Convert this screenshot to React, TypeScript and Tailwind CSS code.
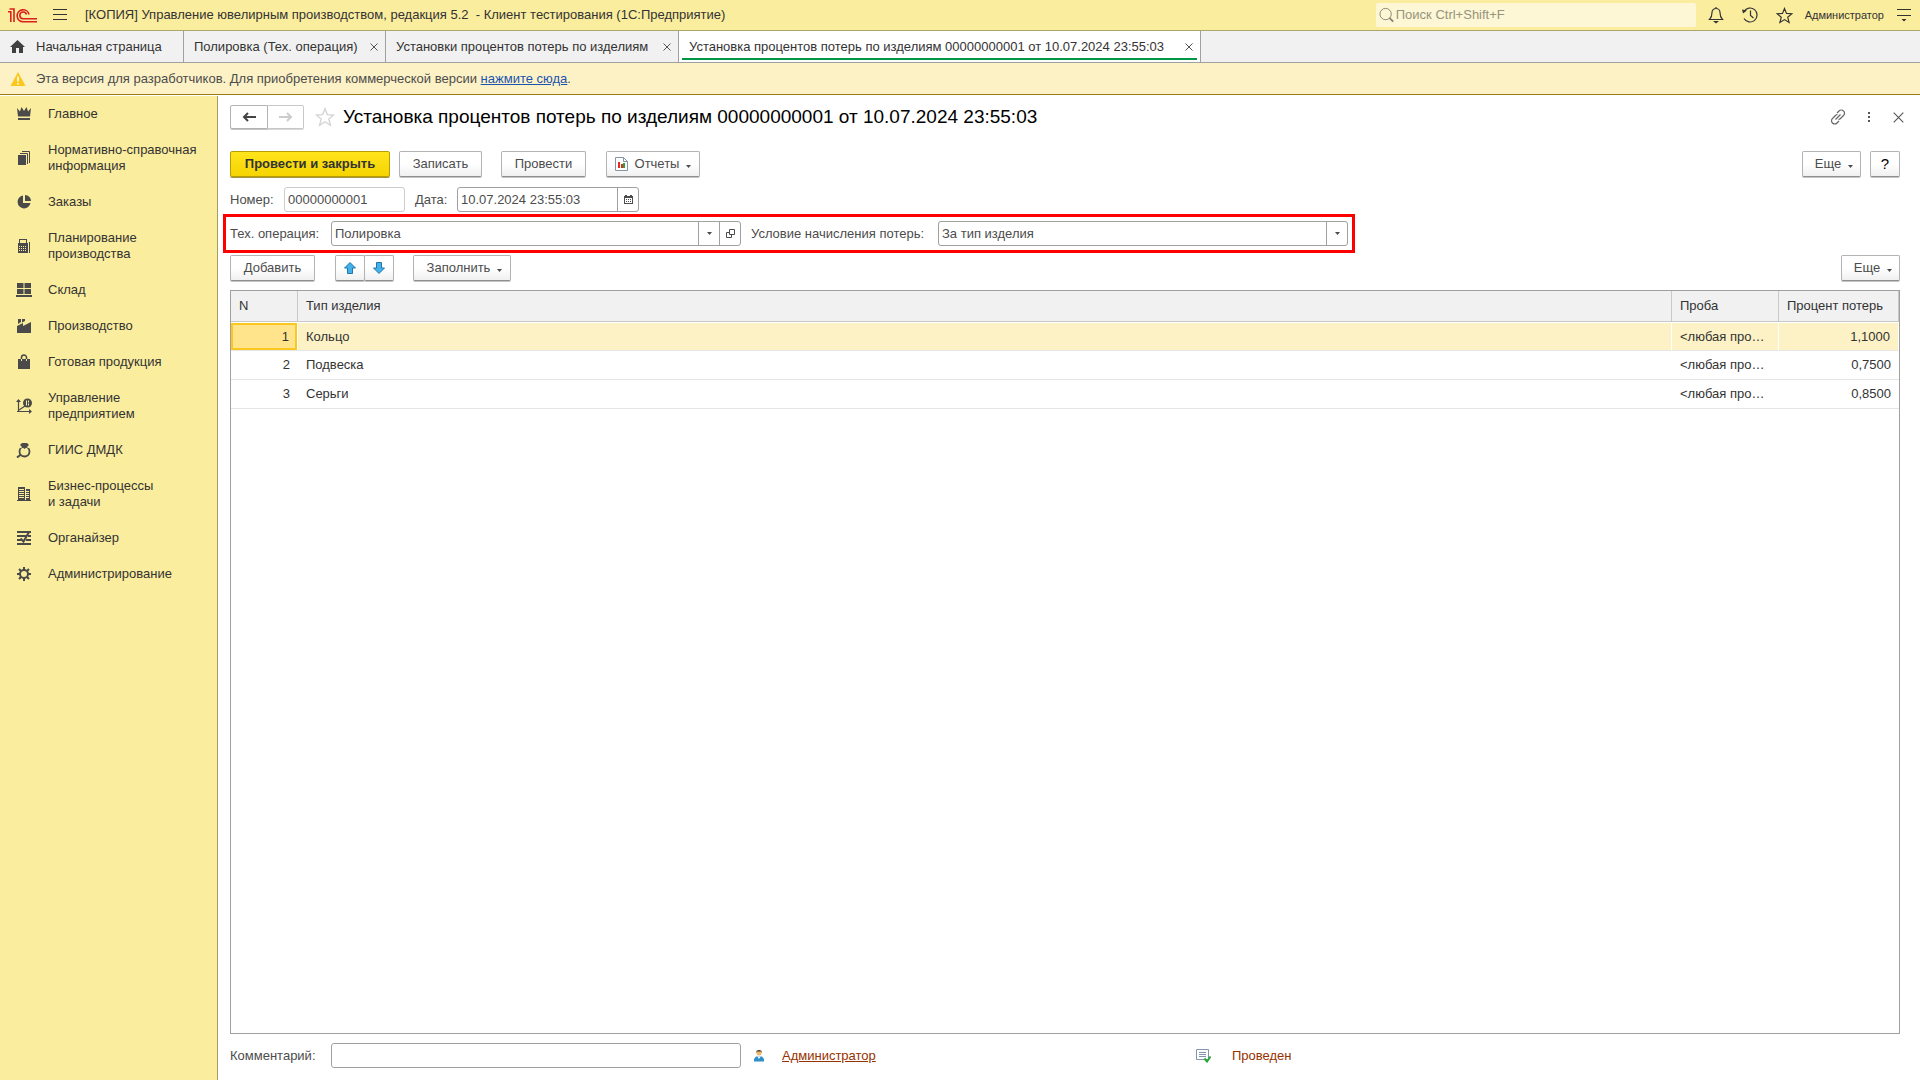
import { useState } from "react";
import type { ReactNode } from "react";

interface MenuItem {
  title: string;
  icon: ReactNode;
}

interface LossRow {
  id: number;
  type: string;
  sample: string;
  percent: string;
}

const rows: LossRow[] = [
  { id: 1, type: "Кольцо", sample: "<любая проба>", percent: "1,1000" },
  { id: 2, type: "Подвеска", sample: "<любая проба>", percent: "0,7500" },
  { id: 3, type: "Серьги", sample: "<любая проба>", percent: "0,8500" },
];

const tabs = [
  { title: "Полировка (Тех. операция)", width: "w-[202px]", active: false },
  { title: "Установки процентов потерь по изделиям", width: "w-[293px]", active: false },
  {
    title: "Установка процентов потерь по изделиям 00000000001 от 10.07.2024 23:55:03",
    width: "w-[522px]",
    active: true,
  },
];

const menu: MenuItem[] = [
  {
    title: "Главное",
    icon: <path d="M1 2l3 3.500L5.500 1 8 5l2.500-4L12 5.500 15 2l-1 8.500H2zM2 12h12v2H2z" />,
  },
  {
    title: "Нормативно-справочная информация",
    icon: (
      <>
        <path d="M2 5h8v10H2z" />
        <path d="M4 3.500h7.500V14M6 1.500h7.500V13" fill="none" stroke="currentColor" />
      </>
    ),
  },
  {
    title: "Заказы",
    icon: (
      <>
        <path d="M7 1.500A6.500 6.500 0 1 0 14.500 9H7z" />
        <path d="M9 1a6 6 0 0 1 6 6H9z" />
      </>
    ),
  },
  {
    title: "Планирование производства",
    icon: (
      <>
        <path d="M3 1h8v4h1v10H2V5h1zM4 2v3h6V2z" fillRule="evenodd" />
        <path d="M13.500 4v11" stroke="currentColor" />
        <path d="M3 8.500h8M3 10.500h8M3 12.500h8" stroke="#fbed9e" strokeDasharray="1 1" />
      </>
    ),
  },
  {
    title: "Склад",
    icon: <path d="M1 1h6.500v5H1zM8.500 1H15v5H8.500zM1 7h6.500v5H1zM8.500 7H15v5H8.500zM0 13h16v2H0z" />,
  },
  {
    title: "Производство",
    icon: <path d="M2 1h3v3L2 6zM6 1h3v2L6 4.500zM1 8l6-3v3l8-4v11H1z" />,
  },
  {
    title: "Готовая продукция",
    icon: (
      <>
        <path d="M2 5h12v10H2z" />
        <path d="M5.500 5V3.500a2.500 2.500 0 0 1 5 0V5" fill="none" stroke="currentColor" strokeWidth="1.500" />
        <path d="M5.500 5v2M10.500 5v2" stroke="#fbed9e" />
      </>
    ),
  },
  {
    title: "Управление предприятием",
    icon: (
      <>
        <path d="M2.500 2v12M1 13.500h13M3 12l6-4" fill="none" stroke="currentColor" strokeWidth="1.200" />
        <path d="M0 4l2.500-3L5 4zM13 11l3 2.500-3 2.500z" />
        <circle cx="11.500" cy="5" r="4.500" />
        <path d="M10.500 2.500v5M12.500 2.500v2M12.500 5.500v2" stroke="#fbed9e" />
      </>
    ),
  },
  {
    title: "ГИИС ДМДК",
    icon: (
      <>
        <circle cx="8.500" cy="9.500" r="5" fill="none" stroke="currentColor" strokeWidth="1.800" />
        <path d="M4 5.500l1.500-1M13 5.500l-1.500-1" stroke="#fbed9e" strokeWidth="2" />
        <path d="M6 1h5l2 2-4.500 4L4 3z" />
        <path d="M5 12.500l-4 3" stroke="currentColor" strokeWidth="2" />
      </>
    ),
  },
  {
    title: "Бизнес-процессы и\u00a0задачи",
    icon: (
      <>
        <path d="M2 1h7v14H2zM10 3h4v12h-4zM1 14h14v1H1z" />
        <path
          d="M3 3.500h5M3 5.500h5M3 7.500h5M3 9.500h5M3 11.500h5M10 5.500h3M10 7.500h3M10 9.500h3M10 11.500h3"
          stroke="#fbed9e"
        />
      </>
    ),
  },
  {
    title: "Органайзер",
    icon: (
      <>
        <path d="M1 1h14v2H1zM1 5h9v2H1zM12 5h3v2h-3zM1 9h4v2H1zM10 9h5v2h-5zM1 13h14v2H1z" />
        <path d="M4.500 8.500l3 3L13 2" fill="none" stroke="currentColor" strokeWidth="2" />
      </>
    ),
  },
  {
    title: "Администрирование",
    icon: (
      <>
        <circle cx="8" cy="8" r="4" fill="none" stroke="currentColor" strokeWidth="2" />
        <path
          d="M8 1v3M8 12v3M1 8h3M12 8h3M3 3l2 2M11 11l2 2M13 3l-2 2M5 11l-2 2"
          stroke="currentColor"
          strokeWidth="2"
        />
      </>
    ),
  },
];

const fieldBorder = "border border-[#a0a0a0] rounded-[3px] bg-white";
const headCell = "border-b border-r border-[#c8c8c8] bg-[#f1f1f1] px-2 font-normal";

const Caret = () => (
  <svg width="5" height="3" viewBox="0 0 5 3" className="shrink-0" fill="#4c4c4c">
    <path d="M0 0h5L2.500 3z" />
  </svg>
);

const Cross = ({ size }: { size: number }) => (
  <svg width={size} height={size} viewBox="0 0 8 8" fill="none" stroke="#555" className="shrink-0">
    <path d="M.5.5l7 7M7.500.5l-7 7" strokeWidth={size > 8 ? 0.8 : 1} />
  </svg>
);

const Star = ({ size, color }: { size: number; color: string }) => (
  <svg width={size} height={size} viewBox="0 0 18 18" fill="none" stroke={color} strokeWidth="1.200">
    <path d="M9 1.500l2.100 5.300 5.700.4-4.400 3.600 1.500 5.600L9 13.300l-4.900 3.100 1.500-5.600L1.200 7.200l5.700-.4z" />
  </svg>
);

interface ButtonProps {
  children: ReactNode;
  className: string;
  label?: string;
}

const Button = ({ children, className, label }: ButtonProps) => (
  <button
    type="button"
    aria-label={label}
    className={`flex h-[26px] items-center justify-center rounded-[2px] border border-[#b3b3b3] border-b-[#8f8f8f] bg-linear-to-b from-white from-50% to-[#f0f0f0] shadow-[0_1px_0_#c4c4c4] ${className}`}
  >
    {children}
  </button>
);

const Dropdown = ({ children, className }: ButtonProps) => (
  <Button className={`gap-[7px] ${className}`}>
    {children}
    <span className="pt-1">
      <Caret />
    </span>
  </Button>
);

const Header = () => (
  <header className="flex h-[31px] shrink-0 items-center border-b border-[#aca66b] bg-[#fbed9e] pl-2 pr-[9px] text-[#333]">
    <svg width="30" height="15" viewBox="0 0 30 15" fill="none" stroke="#d9201f" strokeWidth="1.600">
      <path d="M0 3.800h2.800V14M1.500 1h4.500v13" />
      <path d="M21 6.500A6 6 0 1 0 15 13.800h14" />
      <path d="M18.500 6.500A3.400 3.400 0 1 0 15 10.800h14" />
    </svg>
    <button type="button" aria-label="Меню" className="ml-[15px]">
      <svg width="14" height="12" viewBox="0 0 14 12" stroke="#333" strokeWidth="1">
        <path d="M0 .5h14M0 5.500h14M0 10.500h14" />
      </svg>
    </button>
    <h1 className="ml-[18px] whitespace-pre">
      {"[КОПИЯ] Управление ювелирным производством, редакция 5.2  - Клиент тестирования (1С:Предприятие)"}
    </h1>
    <label className="ml-auto flex h-[24px] w-[320px] items-center gap-[2px] rounded-[2px] bg-[#fdf7d5] pl-[3px]">
      <svg width="16" height="16" viewBox="0 0 16 16" fill="none" stroke="#8a8672">
        <circle cx="7" cy="7" r="6" />
        <path d="M11 11l4 4" strokeWidth="2" />
      </svg>
      <input
        type="text"
        aria-label="Поиск"
        placeholder="Поиск Ctrl+Shift+F"
        className="w-full bg-transparent outline-none placeholder:text-[#97937d]"
      />
    </label>
    <div className="ml-[12px] flex items-center gap-[17px]">
      <button type="button" aria-label="Уведомления">
        <svg width="16" height="18" viewBox="0 0 16 18" fill="none" stroke="#333" strokeWidth="1.200">
          <path d="M1.500 13.500c2-2 2.500-4 2.500-7a4 4 0 0 1 8 0c0 3 .5 5 2.500 7zM8 1v1.500" />
          <path d="M5 15h6l-3 2.500z" fill="#333" stroke="none" />
        </svg>
      </button>
      <button type="button" aria-label="История">
        <svg width="18" height="18" viewBox="0 0 18 18" fill="none" stroke="#333" strokeWidth="1.200">
          <path d="M3 5.500A7 7 0 1 1 3 12.500M9.500 4.500v5l3 2.500" />
          <path d="M1 3.500l5 1-4 3z" fill="#333" stroke="none" />
        </svg>
      </button>
      <button type="button" aria-label="Избранное">
        <Star size={17} color="#333" />
      </button>
    </div>
    <span className="ml-[12px] text-[11px]">Администратор</span>
    <button type="button" aria-label="Сервис" className="ml-[13px]">
      <svg width="14" height="14" viewBox="0 0 14 14" stroke="#333">
        <path d="M0 1.500h14M0 7.500h14" />
        <path d="M4.500 11h5L7 13.500z" fill="#333" stroke="none" />
      </svg>
    </button>
  </header>
);

const Tabs = () => (
  <nav className="flex h-[32px] shrink-0 border-b border-[#a0a0a0] bg-[#f1f1f1] text-[#333]">
    <button type="button" className="flex w-[184px] items-center border-r border-[#a0a0a0] pl-[10px]">
      <svg width="15" height="13" viewBox="0 0 15 13" fill="#404040">
        <path d="M7.500 0L15 7h-2v6H9V8H6v5H2V7H0z" />
      </svg>
      <span className="ml-[11px]">Начальная страница</span>
    </button>
    {tabs.map((tab) => (
      <div
        key={tab.title}
        className={`relative flex items-center justify-between whitespace-nowrap border-r border-[#a0a0a0] pl-[10px] pr-[7px] ${tab.width} ${tab.active ? "bg-white" : ""}`}
      >
        <button type="button">{tab.title}</button>
        <button type="button" aria-label="Закрыть">
          <Cross size={8} />
        </button>
        {tab.active && <span className="absolute inset-x-[3px] bottom-[2px] h-[2px] bg-[#009646]" />}
      </div>
    ))}
  </nav>
);

const Banner = () => (
  <div className="flex h-[32px] shrink-0 items-center border-b border-[#997d1a] bg-[#fdf2c5] pl-[10px] text-[#4c4c4c]">
    <svg width="16" height="14" viewBox="0 0 16 14">
      <path d="M8 0l7.500 14H.5z" fill="#fcc71c" />
      <path d="M7.200 4.500h1.600v5H7.200zM7.200 11h1.600v1.500H7.200z" fill="#fff" />
    </svg>
    <p className="ml-[10px]">
      Эта версия для разработчиков. Для приобретения коммерческой версии{" "}
      <a href="#" className="text-[#1a54b0] underline">нажмите сюда</a>.
    </p>
  </div>
);

const Sidebar = () => (
  <aside className="w-[218px] shrink-0 border-r border-[#a69c60] bg-[#fbed9e] text-[#333]">
    {menu.map((item) => (
      <a key={item.title} href="#" className="flex items-center gap-[16px] py-[10px] pl-[16px] pr-[10px] leading-4">
        <svg width="16" height="16" viewBox="0 0 16 16" className="shrink-0 text-[#4a4a4a]" fill="currentColor">
          {item.icon}
        </svg>
        <span className="max-w-[155px]">{item.title}</span>
      </a>
    ))}
  </aside>
);

const LossTable = () => {
  const [selected, setSelected] = useState(1);

  return (
    <div className="mt-[9px] flex-1 border border-[#a0a0a0]">
      <table className="w-full table-fixed border-separate border-spacing-0 text-left text-[#333]">
        <thead>
          <tr className="h-[31px]">
            <th className={`w-[67px] ${headCell}`}>N</th>
            <th className={headCell}>Тип изделия</th>
            <th className={`w-[107px] ${headCell}`}>Проба</th>
            <th className={`w-[120px] ${headCell}`}>Процент потерь</th>
          </tr>
        </thead>
        <tbody>
          {rows.map((row) => {
            const active = row.id === selected;
            const cell = active
              ? "border-y border-r border-b-[#e5e5e5] border-r-white border-t-white bg-[#fdf2c5]"
              : "border-b border-[#e5e5e5]";

            return (
              <tr key={row.id} className="h-[29px]" onClick={() => setSelected(row.id)}>
                <td
                  className={`px-2 text-right ${
                    active
                      ? "border-y border-r border-b-[#e5e5e5] border-r-white border-t-white bg-[#ffe48c] shadow-[inset_0_0_0_2px_#fac81e]"
                      : "border-b border-[#e5e5e5]"
                  }`}
                >
                  {row.id}
                </td>
                <td className={`px-2 ${cell}`}>{row.type}</td>
                <td className={`truncate px-2 ${cell}`}>{row.sample}</td>
                <td className={`px-2 text-right ${cell}`}>{row.percent}</td>
              </tr>
            );
          })}
        </tbody>
      </table>
    </div>
  );
};

const DocumentForm = () => {
  const [date, setDate] = useState("10.07.2024 23:55:03");
  const [comment, setComment] = useState("");

  return (
    <main className="flex min-w-0 flex-1 flex-col bg-white pb-[12px] pl-[12px] pr-[20px] pt-[9px] text-[#4c4c4c]">
      <div className="flex h-[24px] items-center">
        <div className="flex h-[24px]">
          <button
            type="button"
            aria-label="Назад"
            className="flex w-[38px] items-center justify-center rounded-l-[2px] border border-[#b3b3b3] shadow-[0_1px_0_#c4c4c4]"
          >
            <svg width="14" height="10" viewBox="0 0 14 10" fill="none" stroke="#444" strokeWidth="2">
              <path d="M14 5H2M6 1L2 5l4 4" />
            </svg>
          </button>
          <button
            type="button"
            aria-label="Вперед"
            className="flex w-[36px] items-center justify-center rounded-r-[2px] border border-l-0 border-[#c8c8c8] shadow-[0_1px_0_#d8d8d8]"
          >
            <svg width="14" height="10" viewBox="0 0 14 10" fill="none" stroke="#ccc" strokeWidth="2">
              <path d="M0 5h12M8 1l4 4-4 4" />
            </svg>
          </button>
        </div>
        <button type="button" aria-label="В избранное" className="ml-[11px]">
          <Star size={20} color="#d4d4d4" />
        </button>
        <h2 className="ml-[8px] text-[19px] leading-6 text-black">
          Установка процентов потерь по изделиям 00000000001 от 10.07.2024 23:55:03
        </h2>
        <div className="-mr-1 ml-auto flex items-center gap-[22px]">
          <button type="button" aria-label="Ссылка">
            <svg width="16" height="16" viewBox="0 0 16 16" fill="none" stroke="#666" strokeWidth="1.200">
              <path d="M7 4l2-2a3 3 0 0 1 4.500 0 3 3 0 0 1 0 4.500l-3 3a3 3 0 0 1-2 1M9 12l-2 2a3 3 0 0 1-4.500 0 3 3 0 0 1 0-4.500l3-3a3 3 0 0 1 2-1M5.500 10.500l5-5" />
            </svg>
          </button>
          <button type="button" aria-label="Действия">
            <svg width="3" height="11" viewBox="0 0 3 11" fill="#555">
              <path d="M0 0h2v2H0zM0 4h2v2H0zM0 8h2v2H0z" />
            </svg>
          </button>
          <button type="button" aria-label="Закрыть форму">
            <Cross size={11} />
          </button>
        </div>
      </div>

      <div className="mt-[22px] flex">
        <button
          type="button"
          className="h-[26px] w-[160px] rounded-[2px] border border-[#b79d05] bg-linear-to-b from-[#ffe51a] to-[#f5d400] font-bold text-[#333] shadow-[0_1px_0_#a8923a]"
        >
          Провести и закрыть
        </button>
        <Button className="ml-[9px] w-[83px]">Записать</Button>
        <Button className="ml-[19px] w-[85px]">Провести</Button>
        <Dropdown className="ml-[20px] w-[94px]">
          <svg width="13" height="14" viewBox="0 0 13 14" fill="none">
            <path d="M.5.5h8l4 4v9H.5z" fill="#fff" stroke="#8496a6" />
            <path d="M8.500.5v4h4" stroke="#8496a6" />
            <path d="M3 5h2v6H3z" fill="#e32b22" />
            <path d="M6 7h2v4H6z" fill="#e32b22" />
            <path d="M8 6h2v5H8z" fill="#2da33a" />
          </svg>
          Отчеты
        </Dropdown>
        <Dropdown className="ml-auto w-[59px] pl-[5px]">Еще</Dropdown>
        <Button className="ml-[9px] w-[30px] text-[15px] text-black">?</Button>
      </div>

      <div className="mt-[10px] flex h-[25px] items-center">
        <label htmlFor="number" className="w-[54px]">Номер:</label>
        <input
          id="number"
          readOnly
          value="00000000001"
          className="h-[25px] w-[121px] rounded-[3px] border border-[#ccc] px-[3px] outline-none"
        />
        <label htmlFor="date" className="ml-[10px] w-[42px]">Дата:</label>
        <div className={`flex h-[25px] w-[182px] ${fieldBorder}`}>
          <input
            id="date"
            value={date}
            onChange={(e) => setDate(e.target.value)}
            className="min-w-0 flex-1 px-[3px] outline-none"
          />
          <button
            type="button"
            aria-label="Выбрать дату"
            className="flex w-[21px] items-center justify-center border-l border-[#a0a0a0]"
          >
            <svg width="9" height="9" viewBox="0 0 9 9" fill="#4c4c4c">
              <path d="M0 1h1V0h2v1h3V0h2v1h1v8H0zM1 3v5h7V3z" fillRule="evenodd" />
              <path d="M2 4.500h5M2 6.500h5" stroke="#4c4c4c" strokeDasharray="1 1" />
            </svg>
          </button>
        </div>
      </div>

      <div className="mt-[9px] flex h-[25px] items-center self-start outline-[3px] outline-offset-4 outline-[#f00]">
        <label htmlFor="operation" className="w-[101px]">Тех. операция:</label>
        <div className={`flex h-[25px] w-[410px] ${fieldBorder}`}>
          <div className="relative flex flex-1">
            <select id="operation" className="flex-1 appearance-none px-[3px] outline-none">
              <option>Полировка</option>
            </select>
            <span className="pointer-events-none absolute inset-y-0 right-0 flex w-[21px] items-center justify-center border-l border-[#a0a0a0]">
              <Caret />
            </span>
          </div>
          <button
            type="button"
            aria-label="Открыть"
            className="flex w-[21px] items-center justify-center border-l border-[#a0a0a0]"
          >
            <svg width="9" height="9" viewBox="0 0 9 9" fill="none" stroke="#4c4c4c">
              <path d="M3.500.5h5v5h-5zM3 3.500H.5v5h5V6" />
            </svg>
          </button>
        </div>
        <label htmlFor="condition" className="ml-[10px] w-[187px]">Условие начисления потерь:</label>
        <div className={`relative flex h-[25px] w-[410px] ${fieldBorder}`}>
          <select id="condition" className="flex-1 appearance-none px-[3px] outline-none">
            <option>За тип изделия</option>
          </select>
          <span className="pointer-events-none absolute inset-y-0 right-0 flex w-[21px] items-center justify-center border-l border-[#a0a0a0]">
            <Caret />
          </span>
        </div>
      </div>

      <div className="mt-[9px] flex">
        <Button className="w-[85px]">Добавить</Button>
        <Button label="Вверх" className="ml-[20px] w-[30px]">
          <svg width="12" height="12" viewBox="0 0 12 12" fill="#43b1ea" stroke="#2277a8">
            <path d="M6 .5L11.500 6H8.500v5.500h-5V6H.5z" />
          </svg>
        </Button>
        <Button label="Вниз" className="-ml-px w-[30px]">
          <svg width="12" height="12" viewBox="0 0 12 12" fill="#43b1ea" stroke="#2277a8">
            <path d="M6 11.500L.5 6h3V.5h5V6h3z" />
          </svg>
        </Button>
        <Dropdown className="ml-[19px] w-[98px] pl-[5px]">Заполнить</Dropdown>
        <Dropdown className="ml-auto w-[59px] pl-[5px]">Еще</Dropdown>
      </div>

      <LossTable />

      <div className="mt-[9px] flex h-[25px] items-center">
        <label htmlFor="comment" className="w-[101px]">Комментарий:</label>
        <input
          id="comment"
          value={comment}
          onChange={(e) => setComment(e.target.value)}
          className={`h-[25px] w-[410px] px-[3px] outline-none ${fieldBorder}`}
        />
        <svg width="10" height="13" viewBox="0 0 10 13" className="ml-[13px]">
          <path d="M0 12.500V10l2-2.500h6l2 2.500v2.500z" fill="#2f8fc9" />
          <path d="M3.500 7.500h3L5 10z" fill="#fff" />
          <circle cx="5" cy="4" r="2.500" fill="#f3b56b" />
          <path d="M2 4a3 3 0 0 1 6 0L7 2.500H3z" fill="#4a3520" />
        </svg>
        <a href="#" className="ml-[18px] w-[96px] text-[#963200] underline">Администратор</a>
        <div className="ml-[318px] flex items-center gap-[21px] text-[#963200]">
          <svg width="15" height="14" viewBox="0 0 15 14" fill="none">
            <path d="M.5.5h12v10H.5z" fill="#fff" stroke="#8295ab" />
            <path d="M3 3.500h7M3 5.500h7M3 7.500h7" stroke="#8295ab" />
            <path d="M8.500 9.500l2.500 3 3.500-5" stroke="#27a737" strokeWidth="2" />
          </svg>
          Проведен
        </div>
      </div>
    </main>
  );
};

const App = () => (
  <div className="flex min-h-screen flex-col bg-white font-['Liberation_Sans',Arial,sans-serif] text-[13px] leading-4">
    <Header />
    <Tabs />
    <Banner />
    <div className="mt-px flex flex-1">
      <Sidebar />
      <DocumentForm />
    </div>
  </div>
);

export default App;
